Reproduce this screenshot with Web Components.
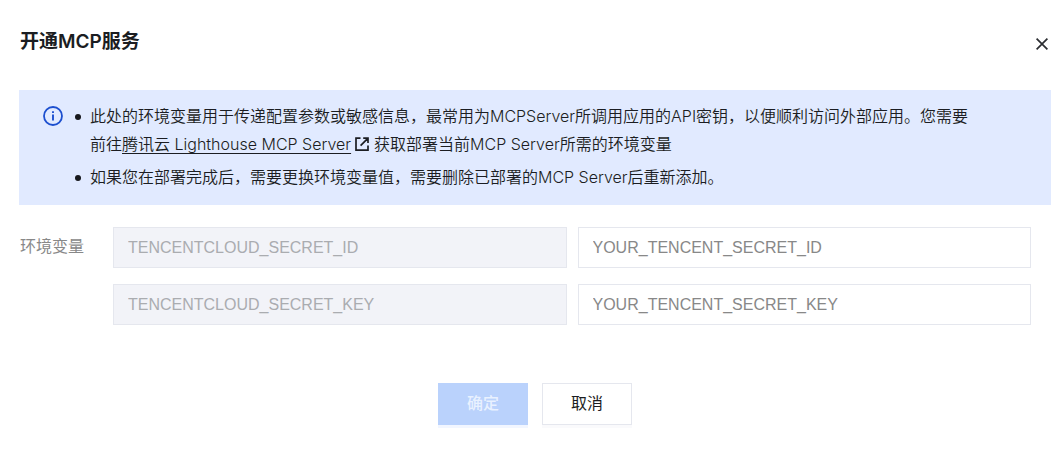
<!DOCTYPE html>
<html lang="zh-CN">
<head>
<meta charset="utf-8">
<meta name="viewport" content="width=device-width, initial-scale=1">
<title>开通MCP服务</title>
<style>
  body {
    margin: 0;
    background: #fff;
    color: #1b1d22;
    font: 16px/28px "Liberation Sans", "Noto Sans CJK SC", sans-serif;
  }
</style>
</head>
<body>
<service-dialog heading="开通MCP服务">
  <info-banner>
    <banner-item>此处的环境变量用于传递配置参数或敏感信息，最常用为MCPServer所调用应用的API密钥，以便顺利访问外部应用。您需要前往<external-link href="#lighthouse">腾讯云 Lighthouse MCP Server</external-link>获取部署当前MCP Server所需的环境变量</banner-item>
    <banner-item>如果您在部署完成后，需要更换环境变量值，需要删除已部署的MCP Server后重新添加。</banner-item>
  </info-banner>
  <env-fields label="环境变量">
    <env-row name="TENCENTCLOUD_SECRET_ID" hint="YOUR_TENCENT_SECRET_ID"></env-row>
    <env-row name="TENCENTCLOUD_SECRET_KEY" hint="YOUR_TENCENT_SECRET_KEY"></env-row>
  </env-fields>
  <action-button slot="actions" kind="primary" disabled>确定</action-button>
  <action-button slot="actions">取消</action-button>
</service-dialog>

<script>
  const define = (name, render) => customElements.define(name, class extends HTMLElement {
    constructor() {
      super();
      this.attachShadow({ mode: 'open' }).innerHTML = render(this).trim();
    }
  });

  define('service-dialog', el => `
    <style>
      :host { display: block; padding: 24px 8px 24px 19px; }
      header { display: flex; justify-content: space-between; align-items: center; height: 36px; margin-bottom: 30px; padding: 0 3px 0 1px; }
      h1 { margin: 0; font: 600 19px/36px Inter, "Noto Sans CJK SC", sans-serif; }
      .close { display: flex; padding: 4px 0 0 4px; border: 0; background: none; color: #2b2d31; cursor: pointer; }
      footer { display: flex; justify-content: center; gap: 14px; margin-top: 58px; }
    </style>
    <section role="dialog" aria-labelledby="heading">
      <header>
        <h1 id="heading">${el.getAttribute('heading')}</h1>
        <button class="close" type="button" aria-label="关闭">
          <svg width="12" height="12" viewBox="0 0 12 12" fill="none" stroke="currentColor" stroke-width="1.7"><path d="M.6.6l10.8 10.8M11.4.6L.6 11.4"/></svg>
        </button>
      </header>
      <slot></slot>
      <footer><slot name="actions"></slot></footer>
    </section>`);

  define('info-banner', () => `
    <style>
      :host { display: flex; padding: 12px 68px 14px 24px; background: #e1eaff; font-family: Inter, "Noto Sans CJK SC", sans-serif; font-weight: 350; }
      svg { flex: none; margin-top: 4px; }
      .list { flex: 1; display: flex; flex-direction: column; gap: 5px; padding-left: 12px; }
    </style>
    <svg width="20" height="20" viewBox="0 0 20 20" fill="none" stroke="#1c4fcf" aria-hidden="true">
      <circle cx="10" cy="10" r="9" stroke-width="1.8"/>
      <path d="M10 8.5v6M10 5.2v1.9" stroke-width="1.9"/>
    </svg>
    <div class="list" role="list"><slot></slot></div>`);

  define('banner-item', () => `
    <style>
      :host { display: flex; gap: 9px; }
      i { flex: none; width: 6px; height: 6px; margin-top: 12px; border-radius: 50%; background: #16181d; }
      div { flex: 1; }
    </style>
    <i></i><div role="listitem"><slot></slot></div>`);

  define('external-link', el => `
    <style>
      :host { display: inline; }
      a { color: inherit; text-decoration: underline 1px; text-underline-offset: 3px; text-decoration-skip-ink: none; }
      svg { margin: 0 5px 0 4px; vertical-align: -1px; }
    </style><a href="${el.getAttribute('href')}"><slot></slot></a><svg width="14" height="14" viewBox="0 0 14 14" fill="none" stroke="currentColor" stroke-width="1.7" aria-hidden="true"><path d="M5.5 1.2H1v11.9h12V8.6M8.2 1.2h4.8V6M12.8 1.4L5.6 8.6"/></svg>`);

  define('env-fields', el => `
    <style>
      :host { display: grid; grid-template-columns: 82px 1fr; gap: 12px; margin: 22px 20px 0 0; }
      span { padding-left: 1px; line-height: 40px; color: #888; }
      div { display: grid; gap: 16px; }
    </style>
    <span id="label">${el.getAttribute('label')}</span>
    <div role="group" aria-labelledby="label"><slot></slot></div>`);

  define('env-row', el => {
    const name = el.getAttribute('name');
    return `
    <style>
      :host { display: grid; grid-template-columns: 1fr 1fr; gap: 11px; }
      input { box-sizing: border-box; width: 100%; min-width: 0; height: 41px; margin: 0; padding: 0 14px; border: 1px solid #e5e7ee; border-radius: 0; background: #fff; color: #333; font: inherit; line-height: 24px; outline: 0; }
      input:disabled { background: #f2f3f8; color: #aaacb0; }
      input::placeholder { color: #888; opacity: 1; }
    </style>
    <input type="text" value="${name}" aria-label="变量名" disabled>
    <input type="text" placeholder="${el.getAttribute('hint')}" aria-label="${name}">`;
  });

  define('action-button', el => `
    <style>
      :host { display: block; }
      button { width: 90px; height: 42px; padding: 0; border: 1px solid #e5e7ee; border-radius: 0; background: #fff; color: #1b1d22; font: inherit; box-shadow: 0 3px 0 #fafafc; cursor: pointer; }
      :host([kind="primary"]) button { border-color: #bad2fc; background: #bad2fc; color: #e9f1ff; font-weight: 500; box-shadow: 0 3px 0 #f2f6ff; }
    </style>
    <button type="button" ${el.hasAttribute('disabled') ? 'disabled' : ''}><slot></slot></button>`);
</script>
</body>
</html>
